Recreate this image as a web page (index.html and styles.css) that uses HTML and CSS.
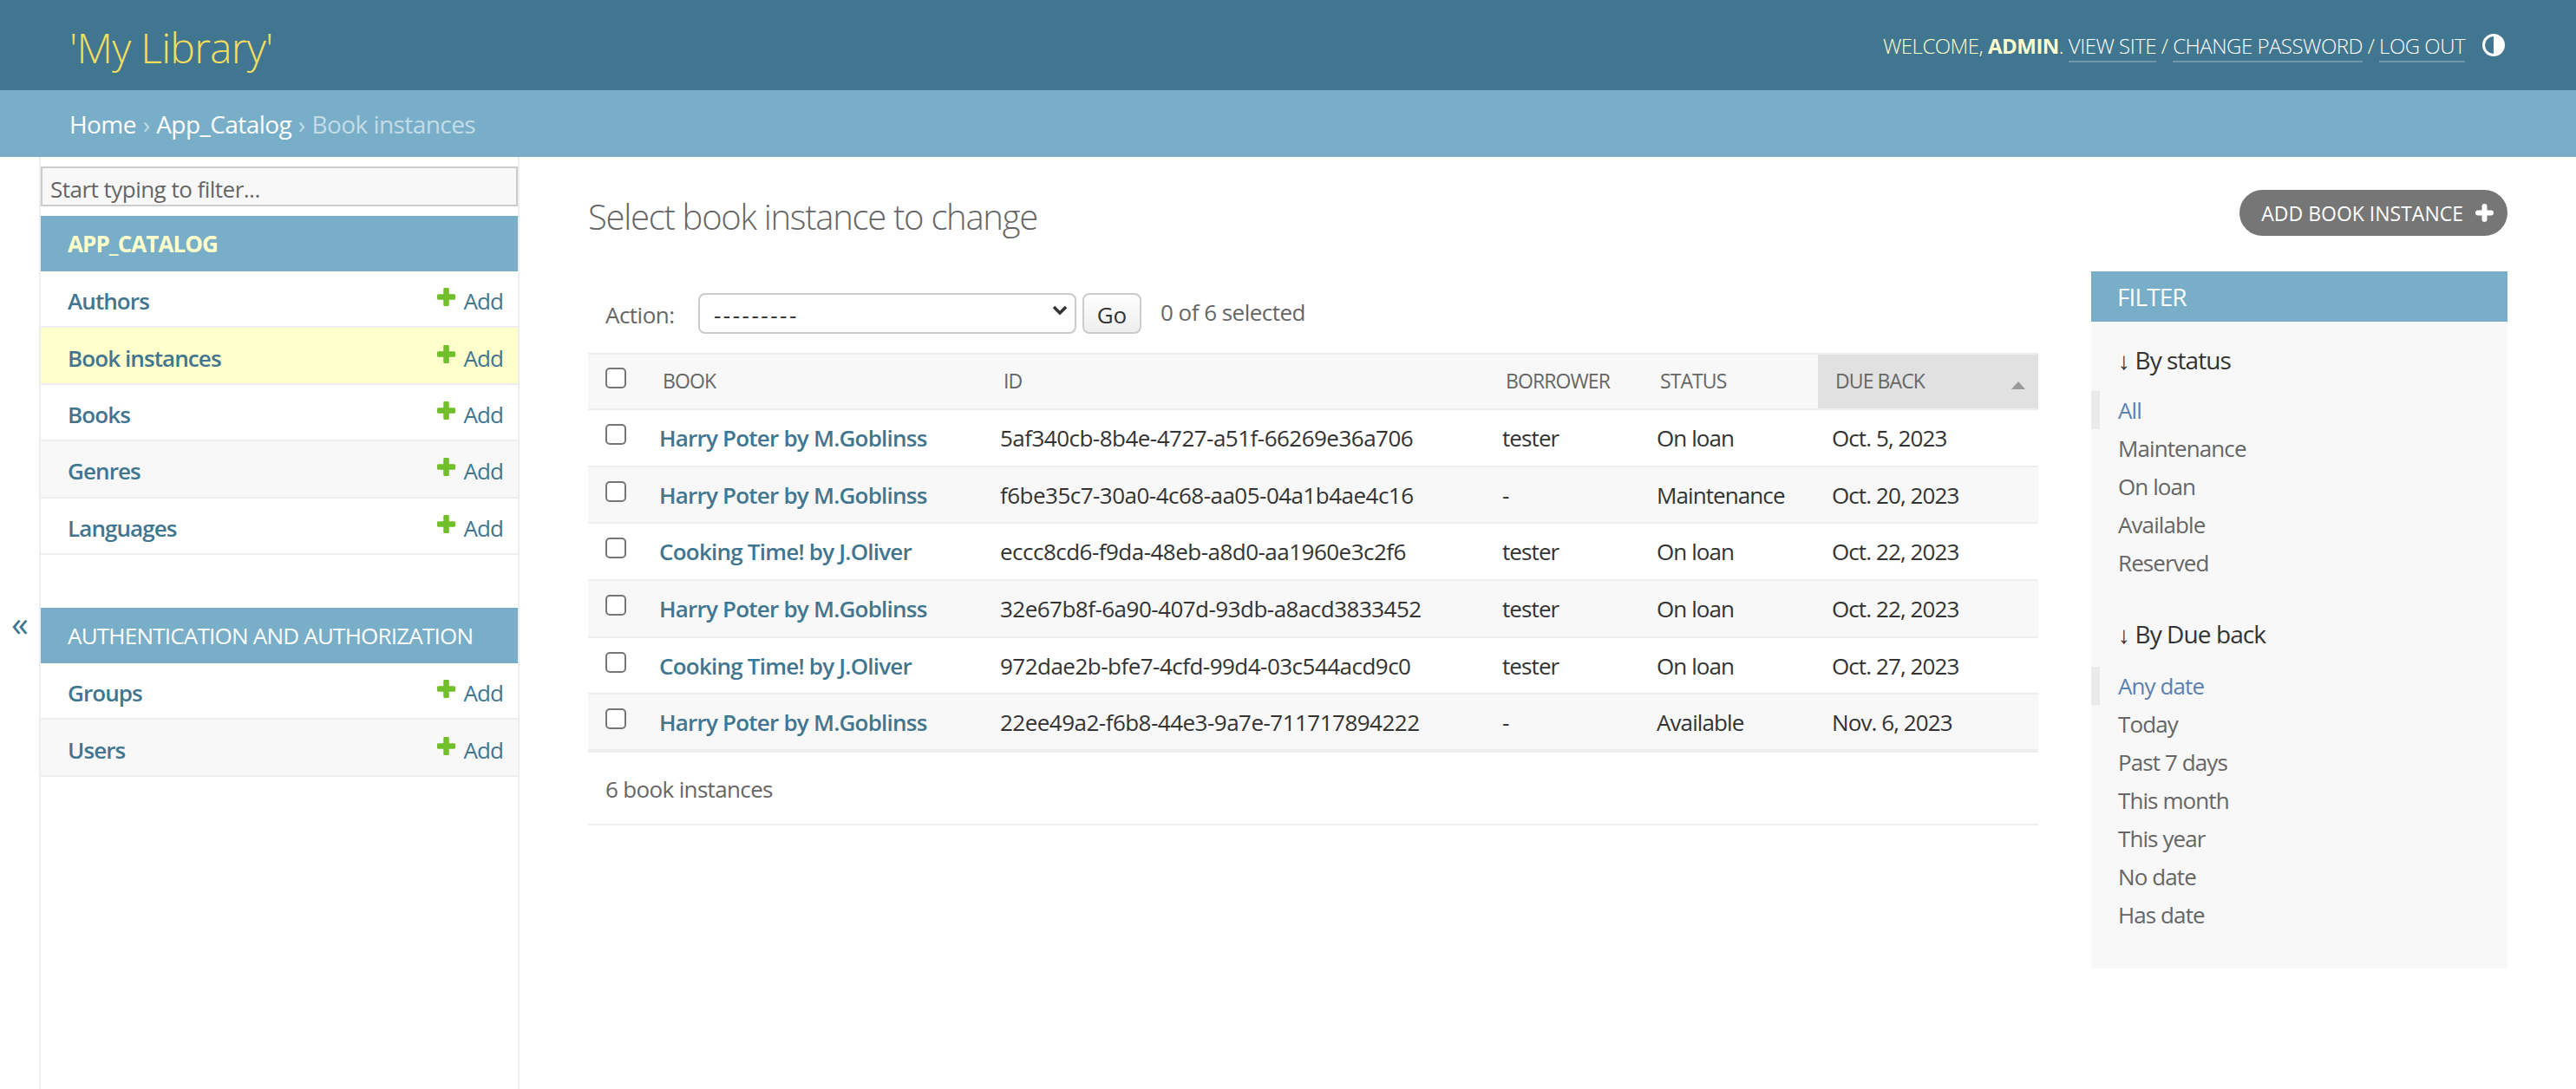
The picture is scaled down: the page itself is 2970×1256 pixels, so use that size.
FILE: index.html
```html
<!DOCTYPE html>
<html lang="en">
<head>
    <meta charset="UTF-8">
    <title>Select book instance to change</title>
    <link rel="stylesheet" href="styles.css">
</head>
<body>

<header class="site-header">
    <div class="branding">'My Library'</div>
    <div class="user-tools">
        <span>WELCOME, <strong>ADMIN</strong>. <a href="#">VIEW SITE</a> / <a href="#">CHANGE PASSWORD</a> / <a href="#">LOG OUT</a></span>
        <svg class="theme-icon" viewBox="0 0 26 26"><circle cx="13" cy="13" r="11.5" fill="none" stroke="#fff" stroke-width="3"/><path d="M13 1.5a11.5 11.5 0 0 1 0 23z" fill="#fff"/></svg>
    </div>
</header>
<div class="breadcrumbs"><a href="#">Home</a> <span class="sep">›</span> <a href="#">App_Catalog</a> <span class="sep">›</span> Book instances</div>

<div class="page">
    <div class="nav-toggle">«</div>
    <nav class="sidebar">
        <input class="nav-filter" type="text" placeholder="Start typing to filter...">

        <div class="app-caption current-app">APP_CATALOG</div>
        <div class="app-row"><a href="#">Authors</a><span class="add-link"><svg class="plus" viewBox="0 0 21 21"><path d="M10.5 2v17M2 10.500h17" stroke="#70bf2b" stroke-width="6.500" stroke-linecap="round" fill="none"/></svg>Add</span></div>
        <div class="app-row current"><a href="#">Book instances</a><span class="add-link"><svg class="plus" viewBox="0 0 21 21"><path d="M10.5 2v17M2 10.500h17" stroke="#70bf2b" stroke-width="6.500" stroke-linecap="round" fill="none"/></svg>Add</span></div>
        <div class="app-row"><a href="#">Books</a><span class="add-link"><svg class="plus" viewBox="0 0 21 21"><path d="M10.5 2v17M2 10.500h17" stroke="#70bf2b" stroke-width="6.500" stroke-linecap="round" fill="none"/></svg>Add</span></div>
        <div class="app-row shaded"><a href="#">Genres</a><span class="add-link"><svg class="plus" viewBox="0 0 21 21"><path d="M10.5 2v17M2 10.500h17" stroke="#70bf2b" stroke-width="6.500" stroke-linecap="round" fill="none"/></svg>Add</span></div>
        <div class="app-row"><a href="#">Languages</a><span class="add-link"><svg class="plus" viewBox="0 0 21 21"><path d="M10.5 2v17M2 10.500h17" stroke="#70bf2b" stroke-width="6.500" stroke-linecap="round" fill="none"/></svg>Add</span></div>

        <div class="app-caption second-app">AUTHENTICATION AND AUTHORIZATION</div>
        <div class="app-row"><a href="#">Groups</a><span class="add-link"><svg class="plus" viewBox="0 0 21 21"><path d="M10.5 2v17M2 10.500h17" stroke="#70bf2b" stroke-width="6.500" stroke-linecap="round" fill="none"/></svg>Add</span></div>
        <div class="app-row shaded"><a href="#">Users</a><span class="add-link"><svg class="plus" viewBox="0 0 21 21"><path d="M10.5 2v17M2 10.500h17" stroke="#70bf2b" stroke-width="6.500" stroke-linecap="round" fill="none"/></svg>Add</span></div>
    </nav>

    <main class="content">
        <div class="title-row">
            <h1>Select book instance to change</h1>
            <a href="#" class="add-button">ADD BOOK INSTANCE
                <svg class="plus-white" viewBox="0 0 21 21"><path d="M10.5 3v15M3 10.500h15" stroke="#fff" stroke-width="6" stroke-linecap="round" fill="none"/></svg>
            </a>
        </div>

        <div class="changelist">
            <div class="results">
                <div class="actions">
                    <label>Action:</label>
                    <div class="select-wrap">
                        <select><option>---------</option></select>
                        <svg class="chevron" viewBox="0 0 18 12"><path d="M2 2l7 7 7-7" stroke="#333" stroke-width="3.500" fill="none"/></svg>
                    </div>
                    <button class="go-button">Go</button>
                    <span class="counter">0 of 6 selected</span>
                </div>

                <table>
                    <colgroup>
                        <col class="col-check"><col class="col-book"><col class="col-id"><col class="col-borrower"><col class="col-status"><col class="col-due">
                    </colgroup>
                    <thead>
                        <tr>
                            <th><input type="checkbox"></th>
                            <th>BOOK</th>
                            <th>ID</th>
                            <th>BORROWER</th>
                            <th>STATUS</th>
                            <th class="sorted">DUE BACK<svg class="sort-icon" viewBox="0 0 16 9"><path d="M8 0l8 9H0z" fill="#999"/></svg></th>
                        </tr>
                    </thead>
                    <tbody>
                        <tr>
                            <td><input type="checkbox"></td>
                            <td><a href="#">Harry Poter by M.Goblinss</a></td>
                            <td class="uuid">5af340cb-8b4e-4727-a51f-66269e36a706</td>
                            <td>tester</td>
                            <td>On loan</td>
                            <td>Oct. 5, 2023</td>
                        </tr>
                        <tr>
                            <td><input type="checkbox"></td>
                            <td><a href="#">Harry Poter by M.Goblinss</a></td>
                            <td class="uuid">f6be35c7-30a0-4c68-aa05-04a1b4ae4c16</td>
                            <td>-</td>
                            <td>Maintenance</td>
                            <td>Oct. 20, 2023</td>
                        </tr>
                        <tr>
                            <td><input type="checkbox"></td>
                            <td><a href="#">Cooking Time! by J.Oliver</a></td>
                            <td class="uuid">eccc8cd6-f9da-48eb-a8d0-aa1960e3c2f6</td>
                            <td>tester</td>
                            <td>On loan</td>
                            <td>Oct. 22, 2023</td>
                        </tr>
                        <tr>
                            <td><input type="checkbox"></td>
                            <td><a href="#">Harry Poter by M.Goblinss</a></td>
                            <td class="uuid">32e67b8f-6a90-407d-93db-a8acd3833452</td>
                            <td>tester</td>
                            <td>On loan</td>
                            <td>Oct. 22, 2023</td>
                        </tr>
                        <tr>
                            <td><input type="checkbox"></td>
                            <td><a href="#">Cooking Time! by J.Oliver</a></td>
                            <td class="uuid">972dae2b-bfe7-4cfd-99d4-03c544acd9c0</td>
                            <td>tester</td>
                            <td>On loan</td>
                            <td>Oct. 27, 2023</td>
                        </tr>
                        <tr>
                            <td><input type="checkbox"></td>
                            <td><a href="#">Harry Poter by M.Goblinss</a></td>
                            <td class="uuid">22ee49a2-f6b8-44e3-9a7e-711717894222</td>
                            <td>-</td>
                            <td>Available</td>
                            <td>Nov. 6, 2023</td>
                        </tr>
                    </tbody>
                </table>
                <p class="paginator">6 book instances</p>
            </div>

            <aside class="filter">
                <h2>FILTER</h2>
                <h3>↓ By status</h3>
                <ul>
                    <li class="selected"><a href="#">All</a></li>
                    <li><a href="#">Maintenance</a></li>
                    <li><a href="#">On loan</a></li>
                    <li><a href="#">Available</a></li>
                    <li><a href="#">Reserved</a></li>
                </ul>
                <h3>↓ By Due back</h3>
                <ul>
                    <li class="selected"><a href="#">Any date</a></li>
                    <li><a href="#">Today</a></li>
                    <li><a href="#">Past 7 days</a></li>
                    <li><a href="#">This month</a></li>
                    <li><a href="#">This year</a></li>
                    <li><a href="#">No date</a></li>
                    <li><a href="#">Has date</a></li>
                </ul>
            </aside>
        </div>
    </main>
</div>

</body>
</html>
```

FILE: styles.css
```css
* {
    box-sizing: border-box;
}
html, body {
    height: 100%;
}
body {
    margin: 0;
    display: flex;
    flex-direction: column;
    overflow: hidden;
    background-color: #fff;
    color: #333;
    font-family: "Open Sans", "Noto Sans", sans-serif;
    font-size: 26px;
    letter-spacing: -0.035em;
}
a {
    color: #417690;
    text-decoration: none;
}

/* top bars */
.site-header {
    height: 104px;
    flex: none;
    display: flex;
    justify-content: space-between;
    align-items: center;
    padding: 0 82px 0 80px;
    background-color: #417690;
    color: #ffc;
}
.branding {
    padding-top: 4px;
    font-size: 48px;
    font-weight: 300;
    color: #f5dd5d;
    letter-spacing: -0.015em;
}
.user-tools {
    display: flex;
    align-items: center;
    font-size: 24px;
    font-weight: 300;
    letter-spacing: -0.021em;
}
.user-tools strong {
    font-weight: 700;
}
.user-tools a {
    color: #fff;
    padding-bottom: 1px;
    border-bottom: 2px solid rgba(255,255,255,0.25);
}
.theme-icon {
    width: 26px;
    height: 26px;
    margin-left: 20px;
}
.breadcrumbs {
    height: 77px;
    flex: none;
    padding: 0 80px;
    line-height: 79px;
    background-color: #79aec8;
    color: #c4dce8;
    font-size: 28px;
    letter-spacing: -0.02em;
}
.breadcrumbs a {
    color: #fff;
}
.sep {
    margin: 0 1px;
}

/* sidebar */
.page {
    flex: 1;
    display: flex;
    min-height: 0;
}
.nav-toggle {
    width: 45px;
    flex: none;
    display: flex;
    align-items: center;
    justify-content: center;
    color: #417690;
    font-size: 40px;
}
.sidebar {
    width: 554px;
    flex: none;
    padding-top: 11px;
    border-left: 2px solid #eee;
    border-right: 2px solid #eee;
}
.nav-filter {
    display: block;
    width: 100%;
    height: 46px;
    margin-bottom: 11px;
    padding: 5px 9px 0;
    background-color: #f8f8f8;
    border: 2px solid #ccc;
    font: inherit;
    letter-spacing: -0.02em;
}
.nav-filter::placeholder {
    color: #666;
    opacity: 1;
}
.app-caption {
    height: 64px;
    padding-left: 31px;
    line-height: 65px;
    background-color: #79aec8;
    color: #fff;
}
.current-app {
    color: #ffc;
    font-weight: 700;
}
.second-app {
    margin-top: 61px;
    letter-spacing: -0.03em;
}
.app-row {
    height: 65.4px;
    display: flex;
    justify-content: space-between;
    align-items: center;
    padding: 5px 17px 0 31px;
    border-bottom: 2px solid #eee;
}
.app-row a {
    font-weight: 600;
}
.app-row.current {
    background-color: #ffc;
}
.app-row.shaded {
    background-color: #f8f8f8;
}
.add-link {
    display: flex;
    align-items: center;
    gap: 9px;
    color: #417690;
}
.plus {
    width: 21px;
    height: 21px;
    margin-top: -9px;
}

/* main content */
.content {
    flex: 1;
    min-width: 0;
    padding: 38px 79px 0 79px;
}
.title-row {
    display: flex;
    justify-content: space-between;
    align-items: center;
    height: 53px;
    margin-bottom: 41px;
}
h1 {
    margin: 0;
    padding-top: 8px;
    font-size: 40px;
    font-weight: 300;
    color: #666;
    letter-spacing: -0.032em;
}
.add-button {
    display: flex;
    align-items: center;
    gap: 14px;
    height: 53px;
    padding: 0 16px 0 25px;
    border-radius: 27px;
    background-color: #767676;
    color: #fff;
    font-size: 23px;
    letter-spacing: 0;
}
.plus-white {
    width: 21px;
    height: 21px;
}
.changelist {
    display: flex;
    gap: 61px;
    align-items: flex-start;
}
.results {
    width: 1672px;
    flex: none;
    padding-top: 25px;
}
.actions {
    display: flex;
    align-items: center;
    height: 47px;
    margin-bottom: 22px;
    padding-left: 20px;
    color: #666;
    letter-spacing: -0.02em;
}
.actions label {
    width: 107px;
    padding-top: 2px;
}
.select-wrap {
    position: relative;
    width: 436px;
    height: 47px;
    margin-right: 7px;
}
.select-wrap select {
    appearance: none;
    width: 100%;
    height: 100%;
    padding: 2px 16px 0;
    background-color: #fff;
    border: 2px solid #ccc;
    border-radius: 8px;
    color: #333;
    font: inherit;
    letter-spacing: 2.5px;
}
.chevron {
    position: absolute;
    top: 14px;
    right: 10px;
    width: 18px;
    height: 12px;
    pointer-events: none;
}
.go-button {
    width: 68px;
    height: 47px;
    margin-right: 22px;
    padding: 2px 0 0;
    border: 2px solid #ccc;
    border-radius: 8px;
    background: linear-gradient(#fff, #eee);
    color: #333;
    font: inherit;
}
.counter {
    margin-top: -4px;
}
table {
    width: 100%;
    table-layout: fixed;
    border-collapse: collapse;
}
.col-check { width: 66px; }
.col-book { width: 393px; }
.col-id { width: 579px; }
.col-borrower { width: 178px; }
.col-status { width: 202px; }
th {
    height: 64px;
    padding: 0 0 2px 20px;
    background-color: #f8f8f8;
    border-top: 2px solid #eee;
    border-bottom: 2px solid #eee;
    color: #666;
    font-size: 23px;
    font-weight: 400;
    text-align: left;
}
th.sorted {
    position: relative;
    background-color: #e1e1e1;
}
.sort-icon {
    position: absolute;
    right: 15px;
    top: 31px;
    width: 16px;
    height: 9px;
}
td {
    height: 65px;
    padding: 0 0 0 16px;
    border-bottom: 2px solid #eee;
    white-space: nowrap;
}
td:first-child {
    padding-left: 20px;
}
tbody tr:nth-child(1) td,
tbody tr:nth-child(3) td,
tbody tr:nth-child(4) td {
    height: 66px;
}
td.uuid {
    letter-spacing: -0.02em;
}
tbody tr:nth-child(even) {
    background-color: #f8f8f8;
}
td a {
    font-weight: 600;
    letter-spacing: -0.03em;
}
input[type="checkbox"] {
    appearance: none;
    display: block;
    width: 24px;
    height: 24px;
    margin: -7px 0 0 0;
    background-color: #fff;
    border: 2px solid #767676;
    border-radius: 5px;
}
tbody input[type="checkbox"] {
    margin-top: -8px;
}
.paginator {
    height: 86px;
    margin: 0;
    padding-left: 20px;
    line-height: 84px;
    border-top: 2px solid #eee;
    border-bottom: 2px solid #eee;
    color: #666;
    letter-spacing: -0.025em;
}

/* filter panel */
.filter {
    width: 480px;
    height: 804px;
    flex: none;
    background-color: #f8f8f8;
}
.filter h2 {
    height: 58px;
    margin: 0;
    padding-left: 30px;
    line-height: 58px;
    background-color: #79aec8;
    color: #fff;
    font-size: 28px;
    font-weight: 400;
}
.filter h3 {
    margin: 0;
    padding: 26px 0 18px 31px;
    font-size: 28px;
    line-height: 36px;
    font-weight: 400;
    color: #333;
}
.filter ul + h3 {
    padding-bottom: 20px;
}
.filter ul {
    margin: 0 0 16px;
    padding: 0;
    list-style: none;
}
.filter li {
    height: 44px;
    padding-left: 31px;
    line-height: 44px;
}
.filter li a {
    color: #666;
}
.filter li.selected {
    padding-left: 21px;
    border-left: 10px solid #eaeaea;
}
.filter li.selected a {
    color: #5b80b2;
}
```
